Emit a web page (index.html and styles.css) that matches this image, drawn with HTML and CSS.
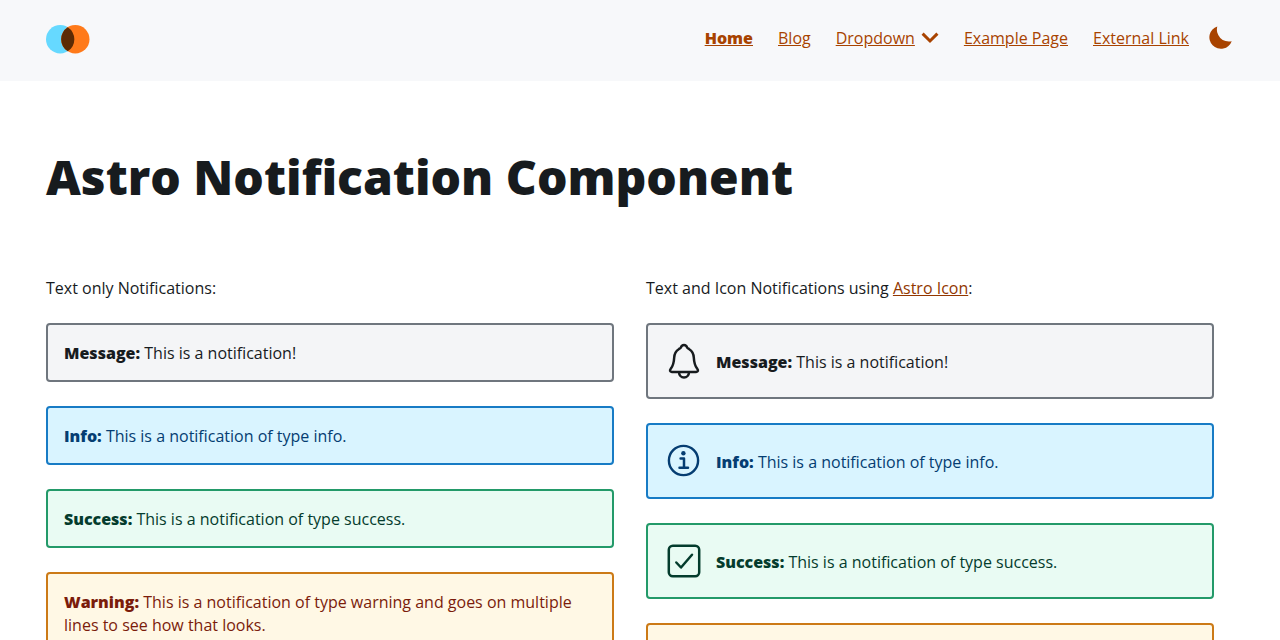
FILE: index.html
```html
<!DOCTYPE html>
<html lang="en">
<head>
<meta charset="utf-8">
<meta name="viewport" content="width=device-width, initial-scale=1">
<title>Astro Notification Component</title>
<link rel="stylesheet" href="styles.css">
</head>
<body>
<header class="header">
  <a class="logo" href="#" aria-label="Homepage">
    <svg width="44" height="30" viewBox="0 0 44 30" aria-hidden="true">
      <circle cx="14.2" cy="15.3" r="14.2" fill="#66d9ff"/>
      <circle cx="29.3" cy="15.3" r="14.2" fill="#ff7a1a"/>
      <path d="M21.75 3.300a14.2 14.2 0 0 1 0 24a14.2 14.2 0 0 1 0-24z" fill="#5c2b05"/>
    </svg>
  </a>
  <nav class="nav" aria-label="Main">
    <ul class="menu">
      <li><a class="current" href="#" aria-current="page">Home</a></li>
      <li><a href="#">Blog</a></li>
      <li><button class="dropdown" type="button" aria-expanded="false"><span class="dropdown-label">Dropdown</span><svg class="chevron" width="18" height="12" viewBox="0 0 18 12" aria-hidden="true"><path d="M1.600 1.600L9 9l7.400-7.400" fill="none" stroke="currentColor" stroke-width="3"/></svg></button></li>
      <li><a href="#">Example Page</a></li>
      <li><a href="#">External Link</a></li>
    </ul>
    <button class="theme" type="button" aria-label="Toggle dark mode">
      <svg width="24" height="24" viewBox="0 0 24 24" aria-hidden="true"><path d="M9.300.4A11.500 11.500 0 1 0 23.700 15.200A12 12 0 0 1 9.300.4z" fill="currentColor"/></svg>
    </button>
  </nav>
</header>
<main class="main">
  <h1 class="title">Astro Notification Component</h1>
  <div class="columns">
    <section class="column">
      <p class="intro">Text only Notifications:</p>
      <div class="notification message"><p><strong>Message:</strong> This is a notification!</p></div>
      <div class="notification info"><p><strong>Info:</strong> This is a notification of type info.</p></div>
      <div class="notification success"><p><strong>Success:</strong> This is a notification of type success.</p></div>
      <div class="notification warning"><p><strong>Warning:</strong> This is a notification of type warning and goes on multiple lines to see how that looks.</p></div>
    </section>
    <section class="column">
      <p class="intro">Text and Icon Notifications using <a href="#">Astro Icon</a>:</p>
      <div class="notification with-icon message">
        <svg class="icon" viewBox="0 0 40 40" aria-hidden="true"><g fill="none" stroke="currentColor" stroke-width="2.500" stroke-linejoin="round"><path d="M20 3.900C18.200 3.900 17.300 4.900 16.900 6.500C16.700 7.400 15.600 7.600 14.700 8.200C11.500 10.200 10.400 13 10.200 16.500C9.900 21.800 9.400 24.400 6.900 27.500C5.300 29.500 6 30.900 7.800 30.900H32.200C34 30.900 34.700 29.500 33.100 27.500C30.600 24.400 30.100 21.800 29.800 16.500C29.600 13 28.500 10.200 25.300 8.200C24.400 7.600 23.300 7.400 23.100 6.500C22.700 4.900 21.800 3.900 20 3.900z"/><path d="M15 31a5 5.500 0 0 0 10 0"/></g></svg>
        <p><strong>Message:</strong> This is a notification!</p>
      </div>
      <div class="notification with-icon info">
        <svg class="icon" viewBox="0 0 40 40" aria-hidden="true"><circle cx="19.500" cy="19.500" r="14.600" fill="none" stroke="currentColor" stroke-width="2.400"/><circle cx="19.400" cy="12.200" r="2.200" fill="currentColor"/><path d="M16.600 17.500h3.400v9M15.500 26.800h8.500" fill="none" stroke="currentColor" stroke-width="2.500" stroke-linecap="round" stroke-linejoin="round"/></svg>
        <p><strong>Info:</strong> This is a notification of type info.</p>
      </div>
      <div class="notification with-icon success">
        <svg class="icon" viewBox="0 0 40 40" aria-hidden="true"><g fill="none" stroke="currentColor" stroke-width="2.500" stroke-linecap="round" stroke-linejoin="round"><rect x="4.800" y="4.800" width="30.400" height="30.400" rx="4"/><path d="M12.300 21.500l4.700 5L28 13.800"/></g></svg>
        <p><strong>Success:</strong> This is a notification of type success.</p>
      </div>
      <div class="notification with-icon warning">
        <svg class="icon" viewBox="0 0 40 40" aria-hidden="true"><g fill="none" stroke="currentColor" stroke-width="2.500" stroke-linecap="round" stroke-linejoin="round"><path d="M20 5L36 34H4zM20 15v10M20 29v1"/></g></svg>
        <p><strong>Warning:</strong> This is a notification of type warning and goes on multiple lines to see how that looks.</p>
      </div>
    </section>
  </div>
</main>
</body>
</html>
```
FILE: styles.css
```css
* {
  box-sizing: border-box;
}

body {
  margin: 0;
  background: #fff;
  color: #171b1e;
  font-family: "Open Sans", sans-serif;
  font-size: 16px;
  line-height: 23px;
}

p,
h1,
ul {
  margin: 0;
  padding: 0;
}

a {
  color: #923700;
  text-underline-offset: 1px;
}

strong {
  font-weight: 800;
}

.header {
  display: flex;
  align-items: flex-start;
  justify-content: space-between;
  padding: 24px 48px 27px 46px;
  background: #f7f8fa;
}

.logo,
.logo svg {
  display: block;
}

.nav,
.menu {
  display: flex;
  align-items: center;
}

.nav {
  gap: 19px;
  padding-top: 2px;
}

.menu {
  gap: 25px;
  list-style: none;
}

.menu a,
.dropdown,
.theme {
  color: #a84300;
}

.menu .current {
  font-weight: 800;
}

.dropdown,
.theme {
  display: flex;
  align-items: center;
  padding: 0;
  border: 0;
  background: none;
  font: inherit;
  cursor: pointer;
}

.dropdown {
  gap: 6px;
}

.dropdown-label {
  text-decoration: underline;
  text-underline-offset: 1px;
}

.theme svg,
.chevron {
  display: block;
}

.main {
  padding: 64px 66px 64px 46px;
}

.title {
  font-size: 48px;
  font-weight: 800;
  line-height: 64px;
}

.columns {
  display: grid;
  grid-template-columns: 1fr 1fr;
  gap: 32px;
  padding-top: 68px;
}

.column {
  display: flex;
  flex-direction: column;
  gap: 24px;
}

.intro {
  line-height: 22px;
}

.notification {
  padding: 17px 16px 15px;
  border: 2px solid;
  border-radius: 4px;
}

.with-icon {
  display: flex;
  align-items: center;
  gap: 12px;
  padding: 16px;
}

.with-icon p {
  padding-top: 2px;
}

.icon {
  flex: none;
  width: 40px;
  height: 40px;
}

.message {
  border-color: #6f767e;
  background: #f4f5f7;
}

.info {
  border-color: #177bc5;
  background: #d9f4ff;
  color: #053d72;
}

.success {
  border-color: #239a69;
  background: #e9fbf3;
  color: #043c2d;
}

.warning {
  border-color: #cc7a16;
  background: #fff8e5;
  color: #7b1c0b;
}
```
